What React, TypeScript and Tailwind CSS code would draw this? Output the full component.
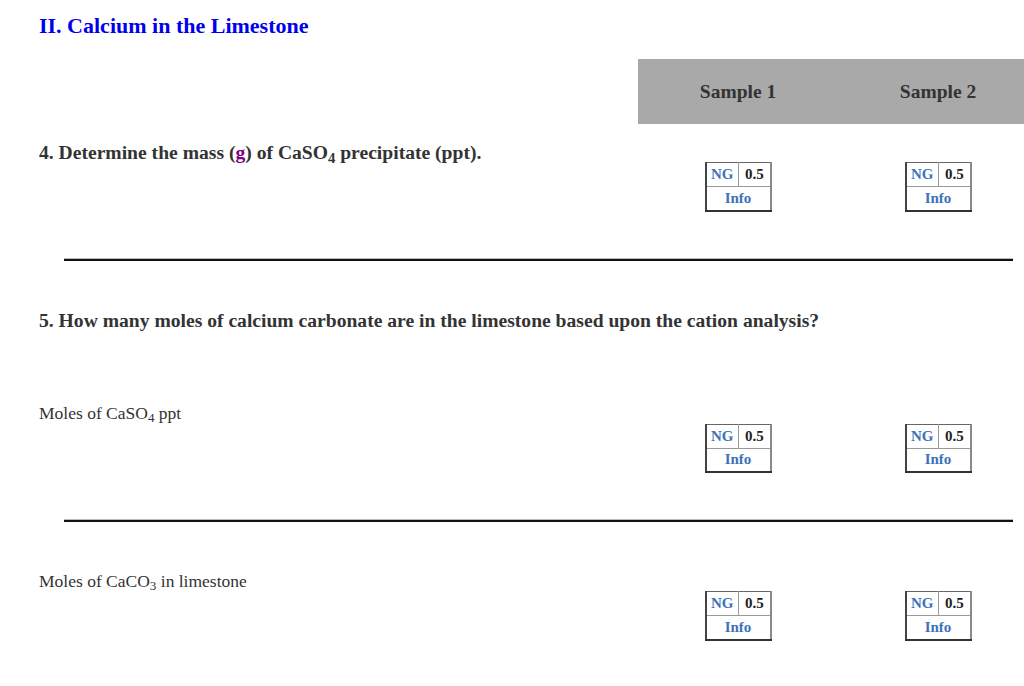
import React from "react";

function Grade() {
  return (
    <table className="border-collapse text-[15px] font-bold leading-none">
      <tbody className="border-t border-t-[#666] border-l-2 border-l-[#444] border-r-2 border-r-[#888] border-b-2 border-b-[#333]">
        <tr className="h-[24px] border-b border-b-[#999]">
          <td className="w-[33px] border-r border-r-[#999] text-center text-[#3d72b8]">NG</td>
          <td className="w-[32px] text-center text-[#222]">0.5</td>
        </tr>
        <tr className="h-[24px]">
          <td colSpan={2} className="text-center text-[#3d72b8]">
            Info
          </td>
        </tr>
      </tbody>
    </table>
  );
}

function GradeCols({ top }: { top: string }) {
  return (
    <div className={`flex shrink-0 ${top}`}>
      <div className="w-[200px] shrink-0 flex justify-center">
        <Grade />
      </div>
      <div className="w-[200px] shrink-0 flex justify-center">
        <Grade />
      </div>
    </div>
  );
}

function Rule({ mt }: { mt: string }) {
  return (
    <div className={`ml-[64px] w-[949px] ${mt} border-t border-t-[#bbb] h-[3px] bg-[#111]`} />
  );
}

export default function App() {
  return (
    <div className="w-[1024px] h-[686px] overflow-hidden bg-white text-[#333] font-['Liberation_Serif','Times_New_Roman',serif]">
      <h1 className="pl-[39px] pt-[13px] text-[22px] leading-[26px] font-bold text-[#0000ee]">
        II. Calcium in the Limestone
      </h1>

      <div className="ml-[638px] mt-[20px] flex h-[65px] w-[400px] items-center bg-[#a9a9a9] text-[19.5px] font-bold text-[#333]">
        <div className="w-[200px] text-center">Sample 1</div>
        <div className="w-[200px] text-center">Sample 2</div>
      </div>

      <div className="flex">
        <div className="w-[638px] shrink-0 pl-[39px] pt-[18px] text-[19.6px] leading-[22px] font-bold">
          4. Determine the mass (<span className="text-[#800080]">g</span>) of CaSO<sub>4</sub> precipitate (ppt).
        </div>
        <GradeCols top="pt-[38px]" />
      </div>

      <Rule mt="mt-[46px]" />

      <div className="pl-[39px] pt-[49px] text-[19.6px] leading-[22px] font-bold">
        5. How many moles of calcium carbonate are in the limestone based upon the cation analysis?
      </div>

      <div className="flex mt-[72px]">
        <div className="w-[638px] shrink-0 pl-[39px] text-[17.5px] leading-[19px]">
          Moles of CaSO<sub>4</sub> ppt
        </div>
        <GradeCols top="pt-[20px]" />
      </div>

      <Rule mt="mt-[46px]" />

      <div className="flex mt-[50px]">
        <div className="w-[638px] shrink-0 pl-[39px] text-[17.5px] leading-[19px]">
          Moles of CaCO<sub>3</sub> in limestone
        </div>
        <GradeCols top="pt-[19px]" />
      </div>
    </div>
  );
}
